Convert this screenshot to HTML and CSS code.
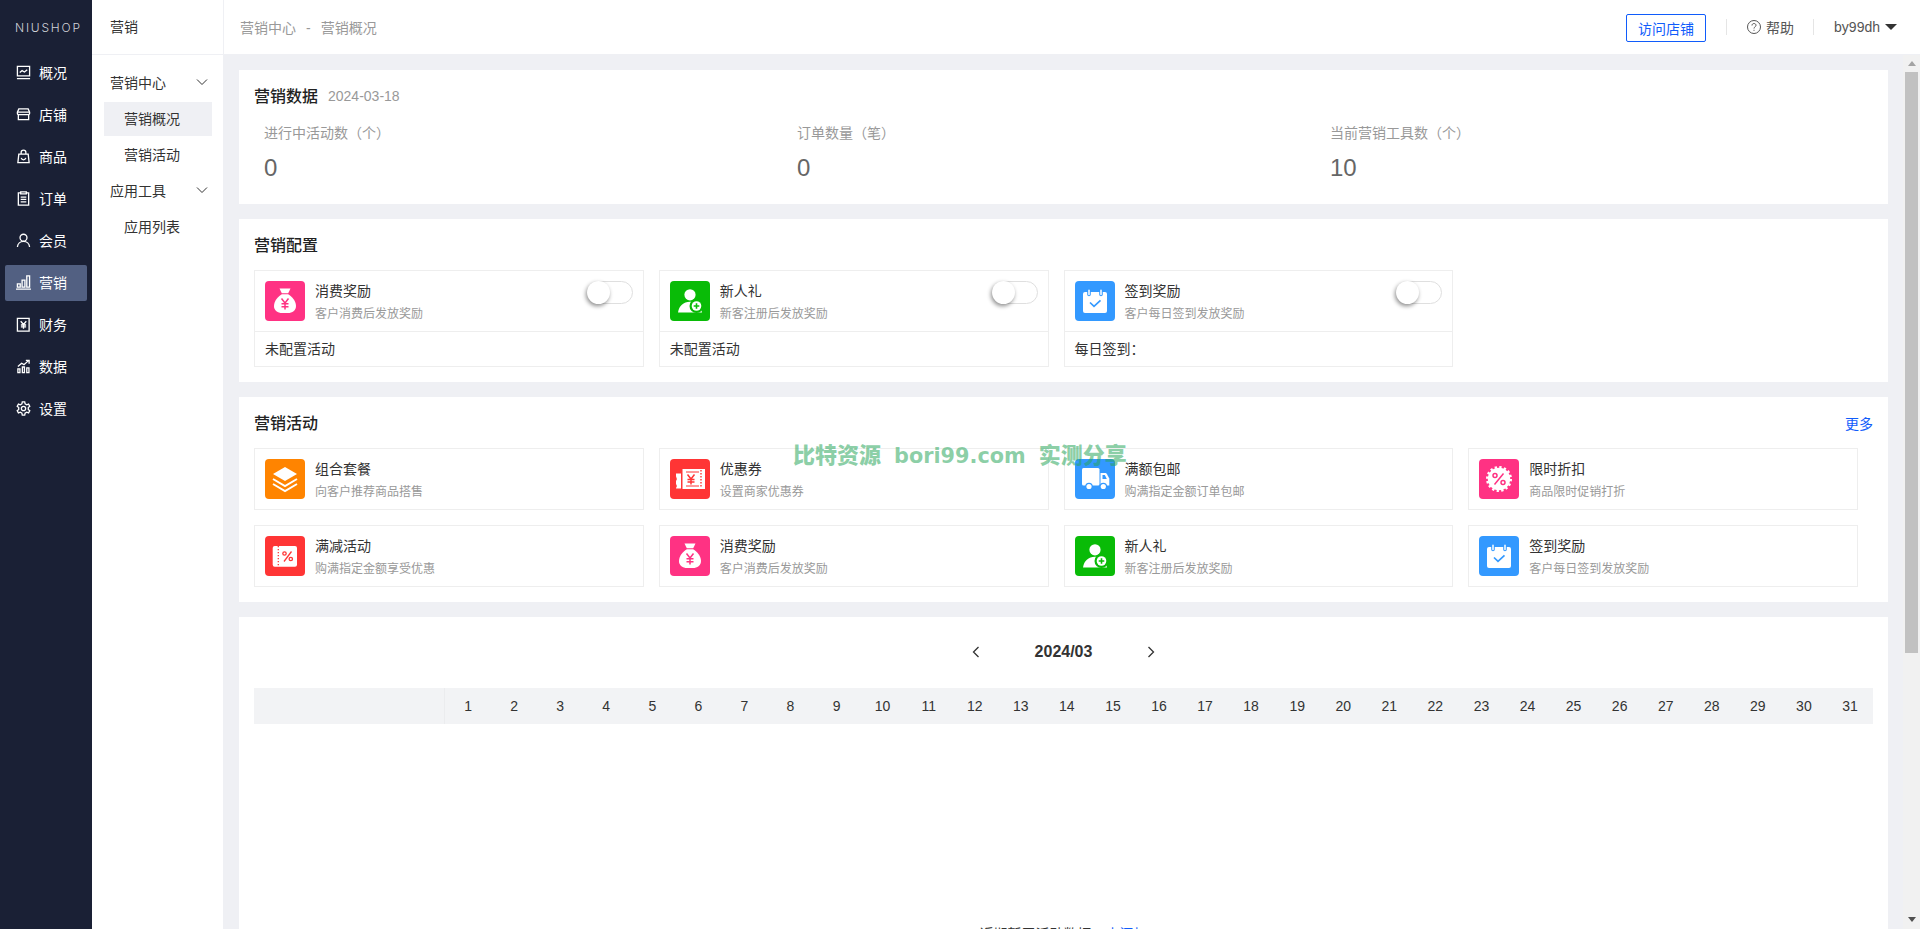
FILE: index.html
```html
<!DOCTYPE html>
<html lang="zh-CN">

<head>
    <meta charset="UTF-8">
    <meta name="viewport" content="width=device-width, initial-scale=1.0">
    <title>营销概况</title>
    <link rel="stylesheet" href="styles.css">
</head>

<body>
    <!-- shared tile icons -->
    <svg class="icon-defs" aria-hidden="true">
        <symbol id="i-bag" viewBox="0 0 40 40">
            <path fill="#fff" d="M14.500 7.500h11l-2.300 4.800h-6.400z" />
            <path fill="#fff" d="M16.800 13.300h6.400c4 2.200 7.800 7.200 7.800 11.700 0 4.800-3.800 7-8 7h-6c-4.200 0-8-2.200-8-7 0-4.500 3.800-9.500 7.800-11.700z" />
            <path fill="none" stroke="currentColor" stroke-width="1.500" d="M16.500 17.500l3.500 4.500 3.500-4.500M20 22v6.500M16.500 22.800h7M16.500 25.800h7" />
        </symbol>
        <symbol id="i-user" viewBox="0 0 40 40">
            <circle cx="20" cy="13.800" r="5.600" fill="#fff" />
            <path fill="#fff" d="M8 31.500c.8-6.500 5.500-10.800 12-10.800 5 0 9 2.500 11 6.500l1 4.300z" />
            <circle cx="26.500" cy="25" r="7" fill="currentColor" />
            <circle cx="26.500" cy="25" r="4.800" fill="#fff" />
            <path fill="none" stroke="currentColor" stroke-width="1.600" d="M26.500 22.200v5.600M23.700 25h5.600" />
        </symbol>
        <symbol id="i-calendar" viewBox="0 0 40 40">
            <rect x="8" y="11" width="24" height="21" rx="2" fill="#fff" />
            <path fill="none" stroke="currentColor" stroke-width="3.600" stroke-linecap="round" d="M14 9.500v4M26 9.500v4" />
            <path fill="none" stroke="#fff" stroke-width="1.500" stroke-linecap="round" d="M14 9.200v4.300M26 9.200v4.300" />
            <path fill="none" stroke="currentColor" stroke-width="1.700" d="M15 21.500l4 3.800 6.500-6" />
        </symbol>
        <symbol id="i-layers" viewBox="0 0 40 40">
            <path fill="#fff" d="M20 8l12 7-12 7-12-7z" />
            <path fill="none" stroke="#fff" stroke-width="2" d="M8 20l12 7 12-7M8 25l12 7 12-7" />
        </symbol>
        <symbol id="i-coupon" viewBox="0 0 40 40">
            <path fill="#fff" d="M6 14.500h5v15H6c0-1 .8-1.500.8-2.500S6 25.500 6 24.500v-2c0-1 .8-1.500.8-2.500S6 18 6 17z" />
            <path fill="#fff" d="M12.500 10H35v20H12.500z" />
            <path fill="none" stroke="currentColor" stroke-width="1" d="M16 13h13M16 27h13" />
            <path fill="none" stroke="currentColor" stroke-width="1.400" stroke-dasharray="1.500 1.500" d="M31 11v18" />
            <path fill="none" stroke="currentColor" stroke-width="1.500" d="M17.500 15.500l3.500 4.500 3.500-4.500M21 20v5.500M17.500 20.500h7M17.500 23h7" />
        </symbol>
        <symbol id="i-truck" viewBox="0 0 40 40">
            <rect x="7" y="9" width="17.500" height="17.500" rx="1.500" fill="#fff" />
            <path fill="#fff" d="M25.500 14h4.500c1 0 1.600.5 2 1.200l2.300 4.300v7h-8.800z" />
            <path fill="currentColor" d="M27.500 16h2.300l2 4h-4.300z" />
            <circle cx="14" cy="27.500" r="3.800" fill="currentColor" />
            <circle cx="14" cy="27.500" r="2.600" fill="#fff" />
            <circle cx="28.300" cy="27.500" r="3.800" fill="currentColor" />
            <circle cx="28.300" cy="27.500" r="2.600" fill="#fff" />
        </symbol>
        <symbol id="i-badge" viewBox="0 0 40 40">
            <circle cx="20" cy="20" r="11.200" fill="#fff" />
            <circle cx="20" cy="20" r="11.800" fill="none" stroke="#fff" stroke-width="2.400" stroke-dasharray="2.300 2.330" />
            <circle cx="16" cy="16.500" r="2" fill="none" stroke="currentColor" stroke-width="1.500" />
            <circle cx="24" cy="23.500" r="2" fill="none" stroke="currentColor" stroke-width="1.500" />
            <path fill="none" stroke="currentColor" stroke-width="1.500" d="M24.500 14.500l-9 11" />
        </symbol>
        <symbol id="i-discount" viewBox="0 0 40 40">
            <rect x="7.700" y="10" width="24.300" height="20.700" rx="2" fill="#fff" />
            <path fill="none" stroke="currentColor" stroke-width="1.300" stroke-dasharray="1.300 1.700" d="M13.300 10v21" />
            <circle cx="19.500" cy="17.500" r="1.700" fill="none" stroke="currentColor" stroke-width="1.300" />
            <circle cx="25.800" cy="23" r="1.700" fill="none" stroke="currentColor" stroke-width="1.300" />
            <path fill="none" stroke="currentColor" stroke-width="1.300" d="M26.500 15.500l-7.500 10" />
        </symbol>
    </svg>

    <div class="layout">
        <aside class="side-nav">
            <div class="logo">NIUSHOP</div>
            <ul class="side-list">
                <li class="side-item">
                    <svg class="side-icon" viewBox="0 0 16 16"><path d="M1.500 1.500h13v10h-13zM1 14.500h14M4 8l2.500-2 2.500 1.500L12 5" /></svg>
                    <span>概况</span>
                </li>
                <li class="side-item">
                    <svg class="side-icon" viewBox="0 0 16 16"><path d="M3 2h10l1.500 3.500v1.500c0 .8-.7 1.200-1.300 1.200H2.800C2.200 8.200 1.500 7.800 1.500 7V5.500zM2.500 8.200v5.300h11V8.200M1.500 5.500h13" /></svg>
                    <span>店铺</span>
                </li>
                <li class="side-item">
                    <svg class="side-icon" viewBox="0 0 16 16"><path d="M3 5.500h10l1 9H2zM5.500 5.500V3.500C5.500 2 6.500 1.200 8 1.200s2.500.8 2.500 2.300v2M5.500 9.500c.5 1.500 1.400 2 2.500 2s2-.5 2.500-2" /></svg>
                    <span>商品</span>
                </li>
                <li class="side-item">
                    <svg class="side-icon" viewBox="0 0 16 16"><path d="M5 2H2.500v13h11V2H11M5 1h6v2H5zM5 6.500h6M5 9h6M5 11.500h6" /></svg>
                    <span>订单</span>
                </li>
                <li class="side-item">
                    <svg class="side-icon" viewBox="0 0 16 16"><circle cx="8" cy="5" r="3.700" /><path d="M1.500 15c.3-3.500 3-6 6.500-6s6.200 2.500 6.500 6" /></svg>
                    <span>会员</span>
                </li>
                <li class="side-item side-item-active">
                    <svg class="side-icon" viewBox="0 0 16 16"><path d="M0 15h16M1.500 9.500h3V13h-3zM6.500 5.500h3V13h-3zM11.500 1h3v12h-3z" /></svg>
                    <span>营销</span>
                </li>
                <li class="side-item">
                    <svg class="side-icon" viewBox="0 0 16 16"><path d="M1.500 1.500h12.500v13.500h-12.500zM5 4.500l3 3.500 3-3.500M8 8v4.500M5.200 8.500h5.600M5.200 10.500h5.600" /></svg>
                    <span>财务</span>
                </li>
                <li class="side-item">
                    <svg class="side-icon" viewBox="0 0 16 16"><path d="M2 10.500h2.200v4H2zM6.800 8.500H9v6H6.800zM11.500 9.500h2.300v5h-2.300zM2 8l4-3.500 2.500 1.500L13 2M10.500 1.500H14V5" /></svg>
                    <span>数据</span>
                </li>
                <li class="side-item">
                    <svg class="side-icon" viewBox="0 0 16 16"><path d="M6.700 1h2.600l.4 2 1.700 1 2-.7 1.300 2.300-1.600 1.300v2.200l1.600 1.300-1.300 2.300-2-.7-1.700 1-.4 2H6.700l-.4-2-1.700-1-2 .7-1.300-2.300 1.600-1.300V6.900L1.300 5.600l1.300-2.300 2 .7 1.700-1z" /><circle cx="8" cy="8" r="2.300" /></svg>
                    <span>设置</span>
                </li>
            </ul>
        </aside>

        <nav class="sub-nav">
            <div class="sub-title">营销</div>
            <div class="sub-list">
                <div class="sub-group">
                    <span>营销中心</span>
                    <svg class="sub-arrow" viewBox="0 0 12 8"><path d="M1 1.500l5 5 5-5" /></svg>
                </div>
                <a class="sub-link sub-link-active">营销概况</a>
                <a class="sub-link">营销活动</a>
                <div class="sub-group">
                    <span>应用工具</span>
                    <svg class="sub-arrow" viewBox="0 0 12 8"><path d="M1 1.500l5 5 5-5" /></svg>
                </div>
                <a class="sub-link">应用列表</a>
            </div>
        </nav>

        <div class="page">
            <header class="top-bar">
                <div class="crumbs">营销中心<span class="crumb-sep">-</span>营销概况</div>
                <div class="top-right">
                    <button class="visit-btn">访问店铺</button>
                    <span class="top-sep"></span>
                    <span class="top-help">
                        <svg class="help-icon" viewBox="0 0 14 14"><circle cx="7" cy="7" r="6.500" /><path d="M5 5.500C5 4.200 5.900 3.500 7 3.500s2 .7 2 1.800c0 1.500-2 1.500-2 3.200" /><path d="M7 9.800v1" /></svg>
                        帮助
                    </span>
                    <span class="top-sep"></span>
                    <span class="top-user">by99dh<i class="caret"></i></span>
                </div>
            </header>

            <div class="main-wrap">
                <main class="content">
                    <section class="card card-stats">
                        <div class="card-head">
                            <h2 class="card-title">营销数据</h2>
                            <span class="card-date">2024-03-18</span>
                        </div>
                        <div class="stats">
                            <div class="stat">
                                <div class="stat-label">进行中活动数（个）</div>
                                <div class="stat-num">0</div>
                            </div>
                            <div class="stat">
                                <div class="stat-label">订单数量（笔）</div>
                                <div class="stat-num">0</div>
                            </div>
                            <div class="stat">
                                <div class="stat-label">当前营销工具数（个）</div>
                                <div class="stat-num">10</div>
                            </div>
                        </div>
                    </section>

                    <section class="card">
                        <div class="card-head">
                            <h2 class="card-title">营销配置</h2>
                        </div>
                        <div class="tiles">
                            <div class="tile">
                                <div class="tile-main">
                                    <span class="tile-icon bg-pink"><svg><use href="#i-bag" /></svg></span>
                                    <div class="tile-text">
                                        <div class="tile-name">消费奖励</div>
                                        <div class="tile-desc">客户消费后发放奖励</div>
                                    </div>
                                    <span class="switch"><i class="switch-knob"></i></span>
                                </div>
                                <div class="tile-foot">未配置活动</div>
                            </div>
                            <div class="tile">
                                <div class="tile-main">
                                    <span class="tile-icon bg-green"><svg><use href="#i-user" /></svg></span>
                                    <div class="tile-text">
                                        <div class="tile-name">新人礼</div>
                                        <div class="tile-desc">新客注册后发放奖励</div>
                                    </div>
                                    <span class="switch"><i class="switch-knob"></i></span>
                                </div>
                                <div class="tile-foot">未配置活动</div>
                            </div>
                            <div class="tile">
                                <div class="tile-main">
                                    <span class="tile-icon bg-blue"><svg><use href="#i-calendar" /></svg></span>
                                    <div class="tile-text">
                                        <div class="tile-name">签到奖励</div>
                                        <div class="tile-desc">客户每日签到发放奖励</div>
                                    </div>
                                    <span class="switch"><i class="switch-knob"></i></span>
                                </div>
                                <div class="tile-foot">每日签到：</div>
                            </div>
                        </div>
                    </section>

                    <section class="card">
                        <div class="card-head card-head-between">
                            <h2 class="card-title">营销活动</h2>
                            <a class="more-link">更多</a>
                        </div>
                        <div class="tiles">
                            <div class="tile">
                                <div class="tile-main">
                                    <span class="tile-icon bg-orange"><svg><use href="#i-layers" /></svg></span>
                                    <div class="tile-text">
                                        <div class="tile-name">组合套餐</div>
                                        <div class="tile-desc">向客户推荐商品搭售</div>
                                    </div>
                                </div>
                            </div>
                            <div class="tile">
                                <div class="tile-main">
                                    <span class="tile-icon bg-red"><svg><use href="#i-coupon" /></svg></span>
                                    <div class="tile-text">
                                        <div class="tile-name">优惠券</div>
                                        <div class="tile-desc">设置商家优惠券</div>
                                    </div>
                                </div>
                            </div>
                            <div class="tile">
                                <div class="tile-main">
                                    <span class="tile-icon bg-blue"><svg><use href="#i-truck" /></svg></span>
                                    <div class="tile-text">
                                        <div class="tile-name">满额包邮</div>
                                        <div class="tile-desc">购满指定金额订单包邮</div>
                                    </div>
                                </div>
                            </div>
                            <div class="tile">
                                <div class="tile-main">
                                    <span class="tile-icon bg-pink"><svg><use href="#i-badge" /></svg></span>
                                    <div class="tile-text">
                                        <div class="tile-name">限时折扣</div>
                                        <div class="tile-desc">商品限时促销打折</div>
                                    </div>
                                </div>
                            </div>
                            <div class="tile">
                                <div class="tile-main">
                                    <span class="tile-icon bg-red"><svg><use href="#i-discount" /></svg></span>
                                    <div class="tile-text">
                                        <div class="tile-name">满减活动</div>
                                        <div class="tile-desc">购满指定金额享受优惠</div>
                                    </div>
                                </div>
                            </div>
                            <div class="tile">
                                <div class="tile-main">
                                    <span class="tile-icon bg-pink"><svg><use href="#i-bag" /></svg></span>
                                    <div class="tile-text">
                                        <div class="tile-name">消费奖励</div>
                                        <div class="tile-desc">客户消费后发放奖励</div>
                                    </div>
                                </div>
                            </div>
                            <div class="tile">
                                <div class="tile-main">
                                    <span class="tile-icon bg-green"><svg><use href="#i-user" /></svg></span>
                                    <div class="tile-text">
                                        <div class="tile-name">新人礼</div>
                                        <div class="tile-desc">新客注册后发放奖励</div>
                                    </div>
                                </div>
                            </div>
                            <div class="tile">
                                <div class="tile-main">
                                    <span class="tile-icon bg-blue"><svg><use href="#i-calendar" /></svg></span>
                                    <div class="tile-text">
                                        <div class="tile-name">签到奖励</div>
                                        <div class="tile-desc">客户每日签到发放奖励</div>
                                    </div>
                                </div>
                            </div>
                        </div>
                    </section>

                    <section class="card card-calendar">
                        <div class="month-row">
                            <svg class="month-arrow" viewBox="0 0 12 14"><path d="M8.500 2l-5 5 5 5" /></svg>
                            <span class="month-label">2024/03</span>
                            <svg class="month-arrow" viewBox="0 0 12 14"><path d="M3.500 2l5 5-5 5" /></svg>
                        </div>
                        <div class="days">
                            <div class="days-first"></div>
                            <span>1</span><span>2</span><span>3</span><span>4</span><span>5</span><span>6</span><span>7</span>
                            <span>8</span><span>9</span><span>10</span><span>11</span><span>12</span><span>13</span><span>14</span>
                            <span>15</span><span>16</span><span>17</span><span>18</span><span>19</span><span>20</span><span>21</span>
                            <span>22</span><span>23</span><span>24</span><span>25</span><span>26</span><span>27</span><span>28</span>
                            <span>29</span><span>30</span><span>31</span>
                        </div>
                        <div class="empty-text">近期暂无活动数据，<a class="empty-link">去添加</a></div>
                    </section>
                </main>

                <div class="scrollbar">
                    <i class="scroll-up"></i>
                    <div class="scroll-thumb"></div>
                    <i class="scroll-down"></i>
                </div>
            </div>
        </div>

        <div class="watermark">比特资源<span class="watermark-url">bori99.com</span>实测分享</div>
    </div>
</body>

</html>
```

FILE: styles.css
```css
* {
    box-sizing: border-box;
}

html,
body {
    margin: 0;
    height: 100%;
    overflow: hidden;
}

body {
    font-family: "Liberation Sans", "Noto Sans CJK SC", sans-serif;
    font-size: 14px;
    color: #333;
    background-color: #fff;
}

.icon-defs {
    display: none;
}

.layout {
    position: relative;
    display: flex;
    height: 100vh;
}

/* left dark menu */
.side-nav {
    flex: 0 0 92px;
    background-color: #1a2035;
}

.logo {
    height: 55px;
    padding-left: 15px;
    line-height: 56px;
    font-family: Inter, "Liberation Sans", sans-serif;
    font-size: 12px;
    font-weight: 300;
    letter-spacing: 1.800px;
    color: #d0d2d8;
}

.side-list {
    list-style: none;
    margin: 0;
    padding: 0;
}

.side-item {
    display: flex;
    align-items: center;
    gap: 8px;
    height: 36px;
    margin: 0 5px 6px;
    padding: 0 0 2px 11px;
    color: #fff;
    border-radius: 2px;
}

.side-item-active {
    background-color: #526082;
}

.side-icon {
    width: 15px;
    height: 15px;
    fill: none;
    stroke: #fff;
    stroke-width: 1.400;
}

/* second menu */
.sub-nav {
    flex: 0 0 132px;
    border-right: 1px solid #eff0f4;
}

.sub-title {
    height: 55px;
    padding-left: 18px;
    line-height: 54px;
    border-bottom: 1px solid #eff0f4;
}

.sub-list {
    padding: 9px 10px 0 12px;
}

.sub-group {
    display: flex;
    align-items: center;
    justify-content: space-between;
    height: 36px;
    margin-bottom: 2px;
    padding: 0 5px 0 6px;
}

.sub-arrow {
    width: 12px;
    height: 8px;
    fill: none;
    stroke: #333;
    stroke-width: 1;
}

.sub-link {
    display: block;
    width: 108px;
    height: 34px;
    padding-left: 20px;
    line-height: 34px;
}

.sub-link + .sub-link {
    margin-top: 2px;
}

.sub-link-active {
    background-color: #eff0f4;
}

/* page */
.page {
    flex: 1;
    min-width: 0;
    display: flex;
    flex-direction: column;
}

.top-bar {
    display: flex;
    align-items: center;
    justify-content: space-between;
    height: 55px;
    flex: none;
    padding: 0 23px 1px 16px;
    border-bottom: 1px solid #eff0f4;
}

.crumbs {
    color: #999;
}

.crumb-sep {
    margin: 0 10px;
}

.top-right {
    display: flex;
    align-items: center;
    gap: 20px;
    color: #555;
}

.visit-btn {
    width: 80px;
    height: 28px;
    margin-top: 3px;
    padding: 0;
    font-family: inherit;
    font-size: 14px;
    color: #105cfb;
    background-color: #fff;
    border: 1px solid #105cfb;
    border-radius: 2px;
}

.top-sep {
    width: 1px;
    height: 16px;
    background-color: #e5e5e5;
}

.top-help {
    display: flex;
    align-items: center;
    gap: 5px;
    margin-right: -1px;
}

.help-icon {
    width: 14px;
    height: 14px;
    fill: none;
    stroke: #555;
    stroke-width: 1;
}

.top-user {
    display: flex;
    align-items: center;
    gap: 5px;
}

.caret {
    width: 0;
    height: 0;
    border-top: 6px solid #333;
    border-left: 6px solid transparent;
    border-right: 6px solid transparent;
}

.main-wrap {
    flex: 1;
    min-height: 0;
    display: flex;
    background-color: #eff0f4;
}

.content {
    flex: 1;
    min-width: 0;
    overflow: hidden;
    padding: 15px 15px 0;
}

.scrollbar {
    display: flex;
    flex-direction: column;
    flex: 0 0 17px;
    padding: 0 2px;
    background-color: #f1f1f1;
}

.scroll-up {
    display: block;
    width: 0;
    height: 0;
    margin: 6px 0 6px 3px;
    border-bottom: 5px solid #a3a3a3;
    border-left: 4px solid transparent;
    border-right: 4px solid transparent;
}

.scroll-thumb {
    height: 581px;
    background-color: #c1c1c1;
}

.scroll-down {
    display: block;
    width: 0;
    height: 0;
    margin: auto 0 7px 3px;
    border-top: 5px solid #505050;
    border-left: 4px solid transparent;
    border-right: 4px solid transparent;
}

/* cards */
.card {
    padding: 15px;
    margin-bottom: 15px;
    background-color: #fff;
}

.card-head {
    display: flex;
    align-items: center;
    gap: 10px;
    height: 22px;
    margin-bottom: 14px;
}

.card-head-between {
    justify-content: space-between;
}

.card-title {
    margin: 0 0 2px;
    font-size: 16px;
    font-weight: 500;
    color: #222;
}

.card-date {
    color: #999;
}

.more-link {
    color: #105cfb;
}

.card-stats {
    height: 134px;
}

.card-stats .card-head {
    margin-bottom: 15px;
}

.stats {
    display: grid;
    grid-template-columns: repeat(3, 1fr);
    padding: 0 10px;
}

.stat-label {
    height: 22px;
    line-height: 22px;
    color: #999;
}

.stat-num {
    margin-top: 10px;
    line-height: 28px;
    font-size: 24px;
    color: #666;
}

.tiles {
    display: grid;
    grid-template-columns: repeat(4, 1fr);
    gap: 15px;
    padding-right: 15px;
}

.tile {
    border: 1px solid #eeeeee;
}

.tile-main {
    display: flex;
    height: 60px;
    padding: 10px;
}

.tile-icon {
    flex: 0 0 40px;
    height: 40px;
    border-radius: 4px;
}

.tile-icon svg {
    display: block;
    width: 40px;
    height: 40px;
}

.bg-pink {
    background-color: #ff3283;
    color: #ff3283;
}

.bg-green {
    background-color: #09bb07;
    color: #09bb07;
}

.bg-blue {
    background-color: #3399ff;
    color: #3399ff;
}

.bg-orange {
    background-color: #ff8400;
    color: #ff8400;
}

.bg-red {
    background-color: #ff3535;
    color: #ff3535;
}

.tile-text {
    margin-left: 10px;
    flex: 1;
}

.tile-name {
    line-height: 20px;
    color: #333;
}

.tile-desc {
    margin-top: 6px;
    line-height: 15px;
    font-size: 12px;
    color: #999;
}

.tile-foot {
    height: 35px;
    padding-left: 10px;
    line-height: 34px;
    border-top: 1px solid #eeeeee;
}

.switch {
    display: block;
    width: 46px;
    height: 23px;
    border: 1px solid #dfdfdf;
    border-radius: 12px;
}

.switch-knob {
    display: block;
    width: 23px;
    height: 23px;
    margin: -1px 0 0 -1px;
    border-radius: 50%;
    background-color: #fff;
    box-shadow: -1px 2px 4px rgba(0, 0, 0, 0.45);
}

/* calendar */
.card-calendar {
    height: 400px;
    margin-bottom: 0;
}

.month-row {
    display: flex;
    align-items: center;
    justify-content: center;
    gap: 53px;
    height: 40px;
    margin-bottom: 16px;
}

.month-arrow {
    width: 12px;
    height: 14px;
    fill: none;
    stroke: #333;
    stroke-width: 1.300;
}

.month-label {
    font-size: 16px;
    font-weight: 700;
}

.days {
    display: grid;
    grid-template-columns: 191px repeat(31, 1fr);
    height: 36px;
    line-height: 36px;
    text-align: center;
    background-color: #f2f3f5;
}

.days-first {
    border-right: 1px solid #ebecee;
}

.empty-text {
    margin-top: 200px;
    line-height: 20px;
    text-align: center;
}

.empty-link {
    color: #105cfb;
}

.watermark {
    position: absolute;
    left: 793px;
    top: 443px;
    font-family: "DejaVu Sans", "Noto Sans CJK SC", sans-serif;
    font-size: 22px;
    font-weight: 900;
    line-height: 26px;
    white-space: nowrap;
    color: rgba(40, 165, 90, 0.55);
}

.watermark-url {
    margin: 0 13px;
    font-size: 20.800px;
    font-weight: 700;
}
```
